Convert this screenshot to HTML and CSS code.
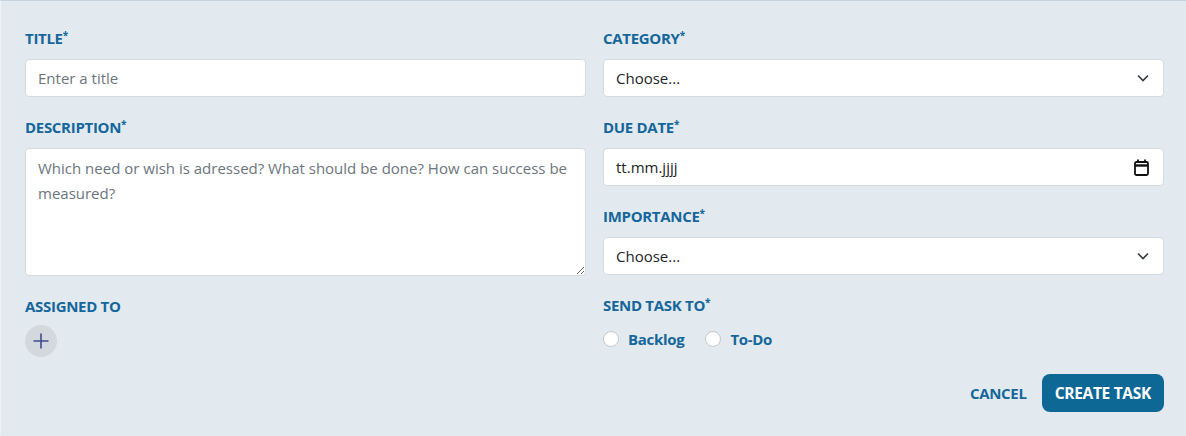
FILE: index.html
```html
<!DOCTYPE html>
<html lang="en">
<head>
<meta charset="utf-8">
<title>Create task</title>
<link rel="stylesheet" href="styles.css">
</head>
<body>
<form class="task-form">
  <div class="grid">
    <div class="col">
      <div class="field">
        <label class="label">TITLE<span class="req">*</span></label>
        <input class="control" type="text" placeholder="Enter a title">
      </div>
      <div class="field">
        <label class="label">DESCRIPTION<span class="req">*</span></label>
        <textarea class="control area" placeholder="Which need or wish is adressed? What should be done? How can success be measured?"></textarea>
      </div>
      <div class="field">
        <label class="label">ASSIGNED TO</label>
        <button type="button" class="add-btn" aria-label="Add">
          <svg width="18" height="18" viewBox="0 0 18 18"><path d="M9 1.5v15M1.5 9h15" stroke="#3f4a8f" stroke-width="1.6" fill="none"/></svg>
        </button>
      </div>
    </div>
    <div class="col">
      <div class="field">
        <label class="label">CATEGORY<span class="req">*</span></label>
        <div class="control select"><span>Choose...</span>
          <svg width="12" height="8" viewBox="0 0 12 8"><path d="M1 1.5l5 5 5-5" stroke="#343a40" stroke-width="1.6" fill="none"/></svg>
        </div>
      </div>
      <div class="field">
        <label class="label">DUE DATE<span class="req">*</span></label>
        <div class="control select"><span>tt.mm.jjjj</span>
          <svg width="15" height="17" viewBox="0 0 15 17"><rect x="1" y="3" width="13" height="13" rx="1.5" stroke="#111" stroke-width="1.8" fill="none"/><path d="M1 6.5h13" stroke="#111" stroke-width="2.4"/><path d="M4 0.5v3.5M11 0.5v3.5" stroke="#111" stroke-width="1.8"/></svg>
        </div>
      </div>
      <div class="field">
        <label class="label">IMPORTANCE<span class="req">*</span></label>
        <div class="control select"><span>Choose...</span>
          <svg width="12" height="8" viewBox="0 0 12 8"><path d="M1 1.5l5 5 5-5" stroke="#343a40" stroke-width="1.6" fill="none"/></svg>
        </div>
      </div>
      <div class="field">
        <label class="label">SEND TASK TO<span class="req">*</span></label>
        <div class="radios">
          <label class="radio"><span class="dot"></span>Backlog</label>
          <label class="radio"><span class="dot"></span>To-Do</label>
        </div>
      </div>
    </div>
  </div>
  <div class="actions">
    <button type="button" class="btn-link">CANCEL</button>
    <button type="button" class="btn-primary">CREATE TASK</button>
  </div>
</form>
</body>
</html>
```
FILE: styles.css
```css
html, body {
  margin: 0;
  padding: 0;
  background: #e2eaf0;
}
body {
  font-family: "Open Sans", "Noto Sans", sans-serif;
  color: #212529;
}
.task-form {
  border-top: 1px solid #c5d3dd;
  border-left: 1px solid #eef3f6;
  background: #e2eaf0;
  padding: 27px 22px 24px 24px;
  height: 435px;
  box-sizing: border-box;
}
.grid {
  display: grid;
  grid-template-columns: 1fr 1fr;
  column-gap: 17px;
}
.col {
  display: flex;
  flex-direction: column;
}
.field {
  display: flex;
  flex-direction: column;
  align-items: flex-start;
  margin-bottom: 20px;
}
.label {
  font-size: 15px;
  font-weight: 700;
  line-height: 20px;
  color: #15669a;
  margin-bottom: 11px;
  letter-spacing: -0.3px;
}
.req {
  font-size: 10px;
  vertical-align: top;
  line-height: 14px;
}
.control {
  box-sizing: border-box;
  width: 100%;
  height: 38px;
  background: #fff;
  border: 1px solid #d3dbe1;
  border-radius: 4px;
  font-family: inherit;
  font-size: 15px;
  color: #212529;
  padding: 0 12px;
  margin: 0;
  outline: none;
}
.control::placeholder {
  color: #6c757d;
  opacity: 1;
}
.area {
  height: 128px;
  padding: 7px 8px 7px 12px;
  line-height: 25px;
  font-size: 15px;
  resize: vertical;
  display: block;
}
.select {
  display: flex;
  align-items: center;
  justify-content: space-between;
  padding: 0 14px 0 12px;
}
.add-btn {
  width: 32px;
  height: 32px;
  border-radius: 50%;
  border: none;
  background: #d3d8dd;
  display: flex;
  align-items: center;
  justify-content: center;
  padding: 0;
  margin-top: -2px;
}
.radios {
  display: flex;
  gap: 21px;
  margin-top: 3px;
}
.radio {
  display: flex;
  align-items: center;
  gap: 9px;
  font-size: 15px;
  font-weight: 700;
  color: #15669a;
  letter-spacing: -0.3px;
}
.dot {
  width: 16px;
  height: 16px;
  box-sizing: border-box;
  border-radius: 50%;
  border: 1px solid #c4c9ce;
  background: #fff;
}
.actions {
  display: flex;
  justify-content: flex-end;
  align-items: center;
  gap: 15px;
  margin-top: -3px;
}
.btn-link {
  background: none;
  border: none;
  font-family: inherit;
  font-size: 15px;
  font-weight: 700;
  color: #15669a;
  padding: 0;
  letter-spacing: -0.3px;
}
.btn-primary {
  height: 38px;
  padding: 0 13px;
  border: none;
  border-radius: 8px;
  background: #0e6896;
  color: #fff;
  font-family: inherit;
  font-size: 15.5px;
  font-weight: 700;
  letter-spacing: -0.3px;
}
```
